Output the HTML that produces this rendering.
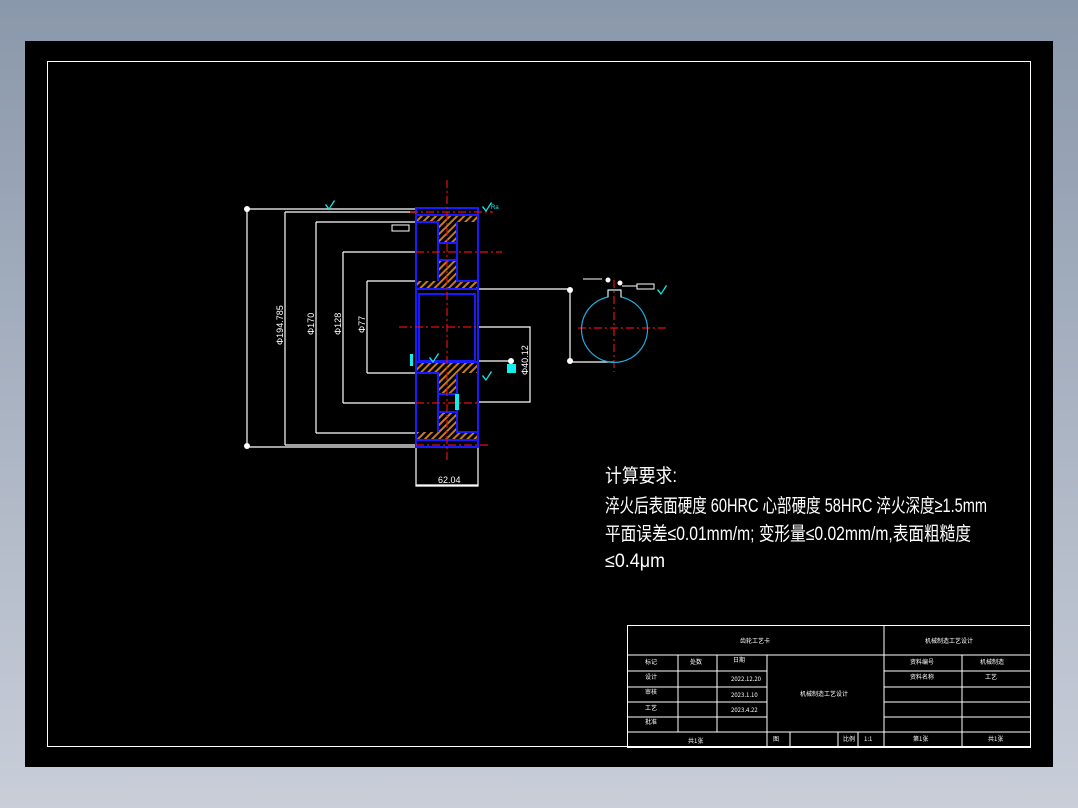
<!DOCTYPE html>
<html><head><meta charset="utf-8"><style>
html,body{margin:0;padding:0;width:1078px;height:808px;overflow:hidden;background:linear-gradient(#8a98ab,#c9ced9);}
svg{position:absolute;left:0;top:0}
</style></head><body>
<svg width="1078" height="808" viewBox="0 0 1078 808" xmlns="http://www.w3.org/2000/svg">
<defs>
<pattern id="h" width="5" height="5" patternUnits="userSpaceOnUse" patternTransform="rotate(45)">
<rect width="5" height="5" fill="#000"/><rect width="2" height="5" fill="#c87a1e"/>
</pattern>
</defs>
<rect x="25" y="41" width="1028" height="726" fill="#000"/>
<rect x="47.5" y="61.5" width="983" height="685" fill="none" stroke="#fff" stroke-width="1"/>
<g stroke="#fff" stroke-width="1.2" fill="none">
<path d="M247 209V447M247 209H416M247 447H416"/>
<path d="M285 212V445M285 212H416M285 445H416"/>
<path d="M316 222V433M316 222H416M316 433H416"/>
<path d="M343 252V403M343 252H416M343 403H416"/>
<path d="M367 281V373M367 281H416M367 373H416"/>
<path d="M416 447V486H478V447M416 485H478"/>
<path d="M478 327H530V402H478M478 361H510"/>
<path d="M478 289H570M570 289V362M570 362H614"/>
</g>
<circle cx="247" cy="209" r="3" fill="#fff"/><circle cx="247" cy="446" r="3" fill="#fff"/>
<circle cx="570" cy="290" r="3" fill="#fff"/><circle cx="570" cy="361" r="3" fill="#fff"/>
<circle cx="511" cy="361" r="3" fill="#fff"/>
<g fill="url(#h)">
<rect x="417" y="215" width="60" height="7"/>
<rect x="438" y="222" width="19" height="21"/>
<rect x="438" y="260" width="19" height="21"/>
<rect x="417" y="281" width="60" height="8"/>
<rect x="417" y="362" width="60" height="11"/>
<rect x="438" y="373" width="19" height="21"/>
<rect x="438" y="412" width="19" height="20"/>
<rect x="417" y="432" width="60" height="8"/>
</g>
<g stroke="#1a1aff" stroke-width="2" fill="none">
<rect x="416" y="208" width="62" height="239"/>
<path d="M416 215H478M416 222H438V281M457 222V281H478M438 243H457M438 260H457M416 289H478"/>
<rect x="419" y="294" width="56" height="67"/>
<path d="M416 362H478M416 373H438V432M457 373V432H478M438 394H457M438 412H457M416 440H478"/>
</g>
<g stroke="#e01010" stroke-width="1.2" stroke-dasharray="8 3 2 3" fill="none">
<path d="M447 180V463M410 212H493M416 252H502M399 327H478M416 403H478M416 445H490M614 280V372M578 328H666"/>
</g>
<path d="M608 297 A33 33 0 1 0 621 297 L621 290 H608 Z" fill="none" stroke="#2ad" stroke-width="1.2"/>
<path d="M608 297V290H621V297" stroke="#fff" fill="none"/>
<circle cx="608" cy="280" r="2.5" fill="#fff"/><circle cx="620" cy="283" r="2.5" fill="#fff"/>
<g stroke="#fff" fill="none" stroke-width="1"><rect x="392" y="225" width="17" height="6"/><rect x="637" y="284" width="17" height="5"/><path d="M583 279H602M622 286H637"/></g>
<g fill="#1ee" font-family="Liberation Sans" font-size="6">
<path d="M326 204l3 4 5-8 1 1-6 9-4-5z"/><path d="M483 206l3 4 5-8 1 1-6 9-4-5z"/><text x="491" y="209">Ra</text>
<path d="M430 357l3 4 5-8 1 1-6 9-4-5z"/><path d="M483 375l3 4 5-8 1 1-6 9-4-5z"/>
<path d="M658 289l3 4 5-8 1 1-6 9-4-5z"/>
<rect x="507" y="364" width="9" height="9"/>
<path d="M410 354h3v12h-3z"/>
<path d="M455 394h4v16h-4z"/>
</g>
<g fill="#fff" font-family="Liberation Sans" font-size="9">
<text transform="translate(283 345) rotate(-90)">Φ194.785</text>
<text transform="translate(314 335) rotate(-90)">Φ170</text>
<text transform="translate(341 335) rotate(-90)">Φ128</text>
<text transform="translate(365 333) rotate(-90)">Φ77</text>
<text transform="translate(528 375) rotate(-90)">Φ40.12</text>
<text x="438" y="483">62.04</text>
</g>
<g fill="#fff" font-family="'Liberation Sans', 'Noto Sans CJK SC', sans-serif" font-size="19">
<text x="605" y="482" textLength="72" lengthAdjust="spacingAndGlyphs">计算要求:</text>
<text x="605" y="512" textLength="382" lengthAdjust="spacingAndGlyphs">淬火后表面硬度 60HRC 心部硬度 58HRC 淬火深度≥1.5mm</text>
<text x="605" y="540" textLength="366" lengthAdjust="spacingAndGlyphs">平面误差≤0.01mm/m; 变形量≤0.02mm/m,表面粗糙度</text>
<text x="605" y="567" textLength="60" lengthAdjust="spacingAndGlyphs">≤0.4μm</text>
</g>
<g stroke="#fff" stroke-width="1" fill="none">
<rect x="627.5" y="625.5" width="403" height="122"/>
<path d="M884 625V747M627 655H1030M627 671H767M627 687H767M627 702H767M627 717H767M627 732H1030M884 671H1030M884 687H1030M884 702H1030M884 717H1030M962 655V747M678 655V732M717 655V732M767 655V747M790 732V747M838 732V747M858 732V747"/>
</g>
<g fill="#fff" font-family="'Noto Sans CJK SC', sans-serif" font-size="6">
<text x="740" y="643">齿轮工艺卡</text><text x="925" y="643">机械制造工艺设计</text>
<text x="645" y="664">标记</text><text x="690" y="664">处数</text><text x="733" y="662">日期</text>
<text x="645" y="679">设计</text><text x="731" y="681">2022.12.20</text>
<text x="645" y="694">审核</text><text x="731" y="697">2023.1.10</text>
<text x="645" y="710">工艺</text><text x="731" y="712">2023.4.22</text>
<text x="645" y="724">批准</text><text x="800" y="696">机械制造工艺设计</text>
<text x="910" y="664">资料编号</text><text x="980" y="664">机械制造</text>
<text x="910" y="679">资料名称</text><text x="985" y="679">工艺</text>
<text x="688" y="743">共1张</text><text x="773" y="741">图</text><text x="843" y="741">比例</text><text x="864" y="741">1:1</text>
<text x="913" y="741">第1张</text><text x="988" y="741">共1张</text>
</g>
</svg>
</body></html>
